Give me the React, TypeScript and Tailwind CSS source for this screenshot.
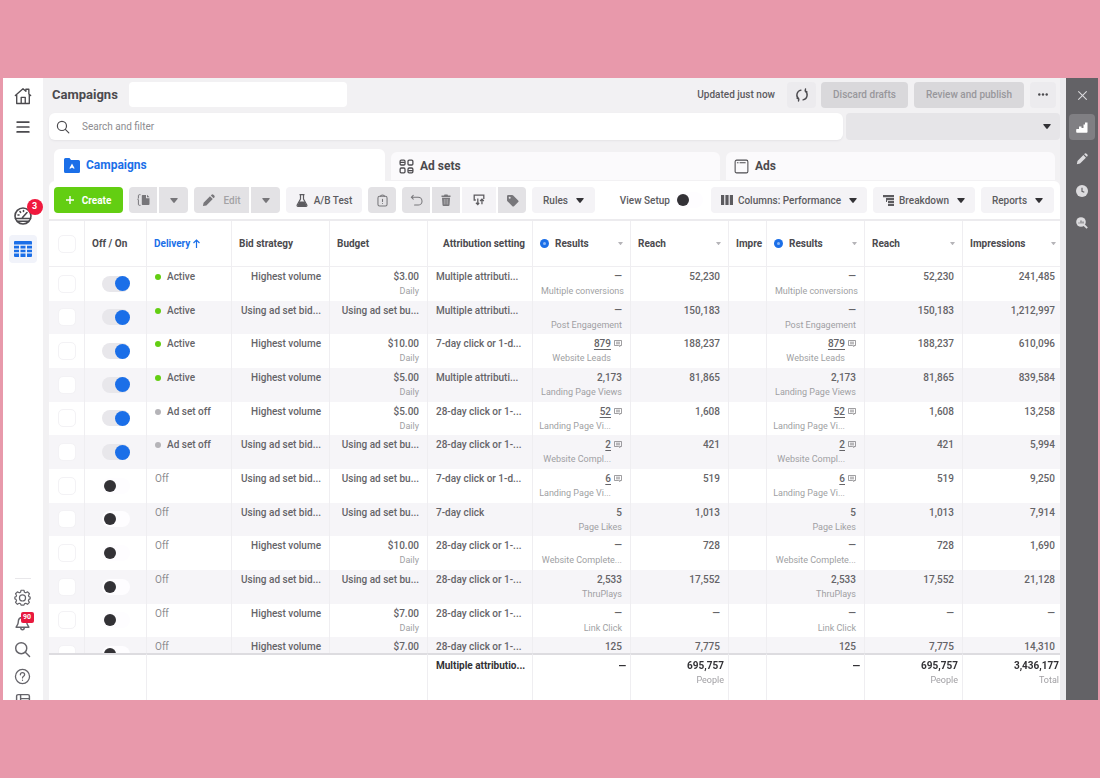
import type { ReactNode } from "react";
import clsx from "clsx";

type Campaign = {
  on: boolean;
  status: "Active" | "Ad set off" | "Off";
  bid: string;
  budget: string;
  attribution: string;
  result: string;
  resultType?: string;
  linked?: boolean;
  reach: string;
  impressions: string;
};

const SET_BID = "Using ad set bid...";
const SET_BUDGET = "Using ad set bu...";
const HIGHEST = "Highest volume";

const campaigns: Campaign[] = [
  { on: true, status: "Active", bid: HIGHEST, budget: "$3.00", attribution: "Multiple attributi...", result: "—", resultType: "Multiple conversions", reach: "52,230", impressions: "241,485" },
  { on: true, status: "Active", bid: SET_BID, budget: SET_BUDGET, attribution: "Multiple attributi...", result: "—", resultType: "Post Engagement", reach: "150,183", impressions: "1,212,997" },
  { on: true, status: "Active", bid: HIGHEST, budget: "$10.00", attribution: "7-day click or 1-d...", result: "879", resultType: "Website Leads", linked: true, reach: "188,237", impressions: "610,096" },
  { on: true, status: "Active", bid: HIGHEST, budget: "$5.00", attribution: "Multiple attributi...", result: "2,173", resultType: "Landing Page Views", reach: "81,865", impressions: "839,584" },
  { on: true, status: "Ad set off", bid: HIGHEST, budget: "$5.00", attribution: "28-day click or 1-...", result: "52", resultType: "Landing Page Vi...", linked: true, reach: "1,608", impressions: "13,258" },
  { on: true, status: "Ad set off", bid: SET_BID, budget: SET_BUDGET, attribution: "28-day click or 1-...", result: "2", resultType: "Website Compl...", linked: true, reach: "421", impressions: "5,994" },
  { on: false, status: "Off", bid: SET_BID, budget: SET_BUDGET, attribution: "7-day click or 1-d...", result: "6", resultType: "Landing Page Vi...", linked: true, reach: "519", impressions: "9,250" },
  { on: false, status: "Off", bid: SET_BID, budget: SET_BUDGET, attribution: "7-day click", result: "5", resultType: "Page Likes", reach: "1,013", impressions: "7,914" },
  { on: false, status: "Off", bid: HIGHEST, budget: "$10.00", attribution: "28-day click or 1-...", result: "—", resultType: "Website Complete...", reach: "728", impressions: "1,690" },
  { on: false, status: "Off", bid: SET_BID, budget: SET_BUDGET, attribution: "28-day click or 1-...", result: "2,533", resultType: "ThruPlays", reach: "17,552", impressions: "21,128" },
  { on: false, status: "Off", bid: HIGHEST, budget: "$7.00", attribution: "28-day click or 1-...", result: "—", resultType: "Link Click", reach: "—", impressions: "—" },
  { on: false, status: "Off", bid: HIGHEST, budget: "$7.00", attribution: "28-day click or 1-...", result: "125", reach: "7,775", impressions: "14,310" },
];

/* ---------- Icons ---------- */

function Stroke({ size = 18, width = 1.5, className, children }: { size?: number; width?: number; className?: string; children: ReactNode }) {
  return (
    <svg width={size} height={size} viewBox="0 0 20 20" fill="none" stroke="currentColor" strokeWidth={width} strokeLinecap="round" strokeLinejoin="round" className={className} aria-hidden="true">
      {children}
    </svg>
  );
}

function Caret({ className }: { className?: string }) {
  return (
    <svg width="8" height="5" viewBox="0 0 8 5" fill="currentColor" className={className} aria-hidden="true">
      <path d="M.8 0h6.4q.9.2.3 1L4.7 4.5q-.7.8-1.4 0L.5 1Q-.1.2.8 0z" />
    </svg>
  );
}

const HomeIcon = () => (
  <Stroke>
    <path d="M1.500 9.500 10 2l3.200 2.800V2.500h3.300v5.200l2 1.800" />
    <path d="M3 9v9.300h14V9" />
    <path d="M8 18v-6.500h4.500V18" />
  </Stroke>
);

const MenuIcon = () => (
  <Stroke width={1.9}>
    <path d="M3.500 4.500h13M3.500 10h13M3.500 15.500h13" />
  </Stroke>
);

const GaugeIcon = () => (
  <Stroke size={20} width={1.6}>
    <circle cx="10" cy="10" r="8" />
    <path d="M2.500 12.500h15M4.500 15.300h11M9.500 11.500L14 6.500M5 9h1M7 5.500l.6.900M10.500 4.600v.9" />
  </Stroke>
);

const TableIcon = () => (
  <svg width="18" height="16" viewBox="0 0 18 16" fill="currentColor" aria-hidden="true">
    <path d="M1 0h16q1 0 1 1v2.500H0V1q0-1 1-1z" />
    <path d="M0 4.800h5v2.600H0zM6.500 4.800h5v2.600h-5zM13 4.800h5v2.600h-5zM0 8.700h5v2.600H0zM6.500 8.700h5v2.600h-5zM13 8.700h5v2.600h-5zM0 12.600h5V16H1q-1 0-1-1zM6.500 12.600h5V16h-5zM13 12.600h5V15q0 1-1 1h-4z" />
  </svg>
);

const GearIcon = () => (
  <Stroke size={17} width={1.4}>
    <path d="M8.300 1.500h3.400l.6 2.300 1.600.7 2.100-1.200 2.200 2.300-1.200 2.100.5 1.300 1.500.4v2.200l-1.500.6-.6 1.500 1.200 2-2.200 2.300-2.100-1.200-1.500.7-.6 1.500H8.300l-.6-1.600-1.600-.6L4 18l-2.200-2.300 1.200-2-.6-1.500-1.400-.6V9.400L2.500 9 3 7.700 1.800 5.600 4 3.300l2.100 1.200 1.600-.7z" />
    <circle cx="10" cy="10.500" r="3.600" />
  </Stroke>
);

const BellIcon = () => (
  <Stroke size={17} width={1.7}>
    <path d="M10 3C6.500 3 5 5.500 5 8.500c0 3.500-2.500 4.500-2.500 6h15c0-1.500-2.500-2.500-2.500-6C15 5.500 13.500 3 10 3z" />
    <path d="M8 15c0 3 4 3 4 0" />
  </Stroke>
);

const SearchIcon = ({ size = 18 }: { size?: number }) => (
  <Stroke size={size} width={1.7}>
    <circle cx="8.500" cy="8.500" r="6.500" />
    <path d="M13.300 13.300l5 5" />
  </Stroke>
);

const HelpIcon = () => (
  <Stroke size={17} width={1.5}>
    <circle cx="10" cy="10" r="8.300" />
    <path d="M7.500 8c0-3.300 5-3.300 5 0 0 1.800-2.500 1.800-2.500 3.700M10 14.200v.2" />
  </Stroke>
);

const PanelIcon = () => (
  <Stroke size={16} width={1.8}>
    <rect x="2" y="2" width="16" height="16" rx="2" />
    <path d="M7 2v16M7 7h11" />
  </Stroke>
);

const FolderIcon = () => (
  <svg width="16" height="15" viewBox="0 0 16 15" aria-hidden="true">
    <path d="M1.500 0h4l1.500 2h7.500Q16 2 16 3.500v10q0 1.500-1.500 1.500h-13Q0 15 0 13.500v-12Q0 0 1.500 0z" fill="currentColor" />
    <path d="M8 5.500l2.700 5H9.300L8 9.500l-1.300 1H5.300z" fill="#fff" />
  </svg>
);

const AdSetsIcon = () => (
  <Stroke size={15} width={1.7}>
    <rect x="1.500" y="1.500" width="6.500" height="6.500" rx="1.500" />
    <rect x="12" y="1.500" width="6.500" height="6.500" rx="1.500" />
    <rect x="1.500" y="12" width="6.500" height="6.500" rx="1.500" />
    <rect x="12" y="12" width="6.500" height="6.500" rx="1.500" />
    <path d="M2 4.500h5M13 15.500h5" />
  </Stroke>
);

const AdsIcon = () => (
  <Stroke size={15} width={1.4}>
    <rect x="1.500" y="1.500" width="17" height="17" rx="2" />
    <path d="M4.500 5h1M8 5h7" />
  </Stroke>
);

const PencilIcon = ({ size = 13 }: { size?: number }) => (
  <svg width={size} height={size} viewBox="0 0 14 14" fill="currentColor" aria-hidden="true">
    <path d="M1 13l.7-3.700L8.600 2.400l3 3L4.700 12.300zM9.500 1.500l.8-.8q1-.8 2 .1l.9.900q.9 1 .1 2l-.8.800z" />
  </svg>
);

const CopyIcon = () => (
  <svg width="13" height="12" viewBox="0 0 13 12" aria-hidden="true">
    <path d="M3.500.7H2.400q-1 0-1 1v2.600L.6 5l.8.800v4.500q0 1 1 1h1.100" fill="none" stroke="currentColor" />
    <path d="M5.500 1H9v3.200h3.500V10q0 1-1 1h-6q-.7 0-.7-1V1.800q0-.8.700-.8z" fill="currentColor" />
    <path d="M10 .8l2.500 2.500H10z" fill="currentColor" />
  </svg>
);

const FlaskIcon = () => (
  <svg width="12" height="13" viewBox="0 0 12 13" aria-hidden="true">
    <path d="M3.500.7h5M4.500 1v4L1.200 11q-.5 1.300.8 1.300h8q1.300 0 .8-1.300L7.500 5V1" fill="none" stroke="currentColor" strokeWidth="1.200" />
    <path d="M3.500 7.500h5l2 3.700q0 .8-.8.800H2.300q-.8 0-.8-.8z" fill="currentColor" />
  </svg>
);

const ClipboardIcon = () => (
  <Stroke size={13} width={1.6}>
    <rect x="3" y="3.500" width="14" height="15" rx="2.500" />
    <path d="M7 3.500C7 1 13 1 13 3.500M10 8v3.500M10 14.500v.2" />
  </Stroke>
);

const UndoIcon = () => (
  <Stroke size={13} width={1.6}>
    <path d="M5 2L2 5l3 3M2 5h10.500a5.500 5.500 0 010 12H7" />
  </Stroke>
);

const TrashIcon = () => (
  <svg width="10" height="12" viewBox="0 0 10 12" aria-hidden="true">
    <path d="M3.500.5h3l.5 1h2.500v1.500H.500V1.500H3zM1 3.700h8l-.5 7.300q-.1 1-1.100 1H2.600q-1 0-1.100-1z" fill="currentColor" />
    <path d="M3.300 5v5.500M5 5v5.500M6.700 5v5.500" stroke="#d9d8db" strokeWidth=".5" />
  </svg>
);

const SwapIcon = () => (
  <svg width="12" height="12" viewBox="0 0 13 13" fill="none" stroke="currentColor" strokeWidth="1.400" aria-hidden="true">
    <path d="M3 6.500H1.300V1.300h10.400v4.200" />
    <path d="M5.200 5v6.500M3.200 9.500l2 2 1.500-1.800M9.700 11V5.500M7.700 7.500l2-2 2 2" />
  </svg>
);

const TagIcon = () => (
  <svg width="13" height="13" viewBox="0 0 13 13" aria-hidden="true">
    <path d="M1 2.200Q1 1 2.200 1h4q.6 0 1 .4l5 5q.8.8 0 1.600l-4.200 4.200q-.8.800-1.600 0l-5-5Q1 6.800 1 6.200z" fill="currentColor" />
    <circle cx="3.700" cy="3.700" r="1" fill="#e3e2e5" />
  </svg>
);

const ColumnsIcon = () => (
  <svg width="12" height="10" viewBox="0 0 12 10" fill="currentColor" aria-hidden="true">
    <path d="M0 0h3.200v10H0zM4.400 0h3.200v10H4.400zM8.800 0H12v10H8.800z" />
  </svg>
);

const BreakdownIcon = () => (
  <svg width="11" height="11" viewBox="0 0 11 11" fill="currentColor" aria-hidden="true">
    <path d="M0 0h11v2.200H0zM3 3h8v2.200H3zM5 6h6v2H5zM5 8.800h6V11H5zM3 3h1v4H3z" />
  </svg>
);

const RefreshIcon = () => (
  <Stroke size={14} width={2}>
    <path d="M5.500 15.800A7.200 7.200 0 018.500 3M14.500 4.200A7.200 7.200 0 0111.500 17M3 14.500l2.500 1.500L5 18.500M17 5.500L14.500 4 15 1.500" />
  </Stroke>
);

const ChartIcon = () => (
  <svg width="12" height="11" viewBox="0 0 12 11" fill="currentColor" aria-hidden="true">
    <path d="M.8 7H3V4.500h2.500V6h2V2.500H9V.5h2.500V10q0 .8-.8.800H1q-.8 0-.8-.8V7.700Q.200 7 .8 7z" />
  </svg>
);

const ClockIcon = () => (
  <svg width="12" height="12" viewBox="0 0 12 12" aria-hidden="true">
    <circle cx="6" cy="6" r="6" fill="currentColor" />
    <path d="M6 2.700v3.600l2.300 1" fill="none" stroke="#636266" strokeWidth="1.200" />
  </svg>
);

const InspectIcon = () => (
  <svg width="12" height="12" viewBox="0 0 12 12" aria-hidden="true">
    <circle cx="5" cy="5" r="4.800" fill="currentColor" />
    <path d="M8 8l3.200 3.200" stroke="currentColor" strokeWidth="1.800" />
    <path d="M3 6.500v-1M5 6.500V3.500M7 6.500v-2" stroke="#636266" />
  </svg>
);

const NoteIcon = () => (
  <svg width="8" height="7" viewBox="0 0 8 7" fill="none" stroke="currentColor" strokeWidth=".7" aria-hidden="true">
    <path d="M.5.5h7v5H5.800L6 6.500 4.500 5.500h-4zM2 2.200h4M2 3.800h4" />
  </svg>
);

/* ---------- Small controls ---------- */

const tones = {
  light: "bg-[#f4f3f6] text-[#5c5b5f]",
  gray: "bg-[#e3e2e5] text-[#77767a]",
  muted: "bg-[#ecebee] text-[#4b4a4e]",
  disabled: "bg-[#d9d8db] text-[#98979b]",
  create: "bg-[#63ce12] text-white",
};

type ButtonProps = { label?: string; tone?: keyof typeof tones; className?: string; children?: ReactNode };

function ToolButton({ label, tone = "light", className, children }: ButtonProps) {
  return (
    <button
      type="button"
      aria-label={label}
      className={clsx("flex h-[26px] shrink-0 items-center justify-center gap-2 font-medium whitespace-nowrap", tones[tone], className)}
    >
      {children}
    </button>
  );
}

function Checkbox({ label }: { label: string }) {
  return (
    <input
      type="checkbox"
      aria-label={label}
      className="mx-auto block size-[18px] appearance-none rounded-[5px] border border-[#f3f2f5] bg-white checked:bg-[#1b6fe8]"
    />
  );
}

function Toggle({ label, on }: { label: string; on?: boolean }) {
  return (
    <input
      type="checkbox"
      role="switch"
      aria-label={label}
      defaultChecked={on}
      className="mx-auto flex h-4 w-7 appearance-none items-center rounded-full bg-[#fefdff] px-[2px] before:size-3 before:rounded-full before:bg-[#333236] checked:justify-end checked:bg-[#e8e7eb] checked:px-0 checked:before:size-[15px] checked:before:bg-[#1b6fe8]"
    />
  );
}

/* ---------- Side rails ---------- */

function SideLink({ label, className, children }: { label: string; className?: string; children: ReactNode }) {
  return (
    <a href="#" aria-label={label} className={clsx("relative flex shrink-0 items-center justify-center", className)}>
      {children}
    </a>
  );
}

function Sidebar() {
  return (
    <nav className="flex w-10 shrink-0 flex-col items-center overflow-hidden bg-white pr-px text-[#4b4a4e]">
      <SideLink label="Home" className="mt-2 size-5"><HomeIcon /></SideLink>
      <SideLink label="Menu" className="mt-[11px] size-5"><MenuIcon /></SideLink>
      <SideLink label="Account overview" className="mt-[69px] size-5">
        <GaugeIcon />
        <span className="absolute -top-[7px] left-[14px] flex size-4 items-center justify-center rounded-full bg-[#f0193e] text-[9px] font-bold text-white">3</span>
      </SideLink>
      <SideLink label="Campaigns table" className="mt-[9px] size-7 rounded bg-[#f1f3fa] text-[#1b6fe8]"><TableIcon /></SideLink>
      <div className="mt-auto flex flex-col items-center text-[#65646a]">
        <div className="w-4 border-t border-[#e8e7ea]" />
        <SideLink label="Settings" className="mt-[5px] h-[26px] w-5"><GearIcon /></SideLink>
        <SideLink label="Notifications" className="h-[26px] w-5">
          <BellIcon />
          <span className="absolute top-[2px] left-2 flex h-[11px] w-[13px] items-center justify-center rounded-[2px] bg-[#e8193e] text-[7px] font-bold text-white">90</span>
        </SideLink>
        <SideLink label="Search" className="h-[27px] w-5"><SearchIcon size={17} /></SideLink>
        <SideLink label="Help" className="h-[26px] w-5"><HelpIcon /></SideLink>
        <div className="mt-1 h-[7px] overflow-hidden">
          <SideLink label="Collapse" className="w-5"><PanelIcon /></SideLink>
        </div>
      </div>
    </nav>
  );
}

function RightRail() {
  const item = "flex size-[26px] items-center justify-center rounded";
  return (
    <aside className="flex w-8 shrink-0 flex-col items-center gap-[6px] bg-[#636266] pt-1 text-[#dcdbde]">
      <button type="button" aria-label="Close" className={item}>
        <Stroke size={13} width={1.6}><path d="M4 4l12 12M16 4L4 16" /></Stroke>
      </button>
      <button type="button" aria-label="Charts" className={clsx(item, "bg-[#807f83] text-white")}><ChartIcon /></button>
      <button type="button" aria-label="Edit" className={item}><PencilIcon size={12} /></button>
      <button type="button" aria-label="History" className={item}><ClockIcon /></button>
      <button type="button" aria-label="Inspect" className={item}><InspectIcon /></button>
    </aside>
  );
}

/* ---------- Header, tabs, toolbar ---------- */

function TopBar() {
  return (
    <header className="flex h-[35px] shrink-0 items-center pr-1 pb-[2px] pl-[3px]">
      <h1 className="text-[13px] font-bold text-[#4b4a4e]">Campaigns</h1>
      <input type="text" aria-label="Account" className="mr-auto ml-[11px] h-[25px] w-[218px] rounded bg-white px-2 outline-none" />
      <span className="font-medium text-[#5c5b5f]">Updated just now</span>
      <ToolButton label="Refresh" tone="muted" className="ml-3 w-[29px] rounded"><RefreshIcon /></ToolButton>
      <ToolButton tone="disabled" className="ml-[5px] w-[87px] rounded">Discard drafts</ToolButton>
      <ToolButton tone="disabled" className="ml-[6px] w-[110px] rounded">Review and publish</ToolButton>
      <ToolButton label="More" tone="muted" className="ml-[6px] w-[26px] rounded">
        <svg width="10" height="3" viewBox="0 0 10 3" fill="currentColor" aria-hidden="true">
          <circle cx="1.300" cy="1.500" r="1.200" />
          <circle cx="5" cy="1.500" r="1.200" />
          <circle cx="8.700" cy="1.500" r="1.200" />
        </svg>
      </ToolButton>
    </header>
  );
}

function SearchBar() {
  return (
    <div className="flex h-[27px] shrink-0 gap-[3px]">
      <label className="flex flex-1 items-center gap-3 rounded-md bg-white pl-[7px] text-[#4b4a4e] shadow-[0_1px_2px_#e4e3e6]">
        <SearchIcon size={14} />
        <input type="text" placeholder="Search and filter" aria-label="Search and filter" className="h-full flex-1 bg-transparent outline-none placeholder:text-[#8d8c90]" />
      </label>
      <div className="relative w-[214px]">
        <select aria-label="Date range" className="h-full w-full appearance-none rounded bg-[#e6e5e8] px-3" />
        <Caret className="pointer-events-none absolute top-[11px] right-[9px] text-[#333236]" />
      </div>
    </div>
  );
}

function Tabs() {
  const tab = "flex flex-1 items-center gap-[6px] rounded-t-md text-[12px] font-bold";
  return (
    <div role="tablist" className="mt-[9px] flex h-8 shrink-0 items-end gap-[6px] px-[5px]">
      <button type="button" role="tab" aria-selected="true" className={clsx(tab, "h-8 bg-white pl-[10px] text-[#1b6fe8]")}>
        <FolderIcon />
        Campaigns
      </button>
      <button type="button" role="tab" aria-selected="false" className={clsx(tab, "mb-px h-7 bg-[#fbfafc] pl-2 text-[#4b4a4e]")}>
        <AdSetsIcon />
        Ad sets
      </button>
      <button type="button" role="tab" aria-selected="false" className={clsx(tab, "mb-px h-7 bg-[#fbfafc] pl-2 text-[#4b4a4e]")}>
        <AdsIcon />
        Ads
      </button>
    </div>
  );
}

function Toolbar() {
  return (
    <div className="flex h-[38px] shrink-0 items-center gap-[6px] rounded-t-md bg-white pr-[6px] pl-[5px]">
      <ToolButton tone="create" className="w-[69px] rounded">
        <svg width="8" height="8" viewBox="0 0 8 8" stroke="currentColor" strokeWidth="1.400" aria-hidden="true">
          <path d="M4 0v8M0 4h8" />
        </svg>
        <span className="font-bold">Create</span>
      </ToolButton>
      <div className="flex gap-[2px]">
        <ToolButton label="Duplicate" tone="gray" className="w-7 rounded-l"><CopyIcon /></ToolButton>
        <ToolButton label="Duplicate options" tone="gray" className="w-[29px] rounded-r"><Caret /></ToolButton>
      </div>
      <div className="flex gap-[2px]">
        <ToolButton tone="gray" className="w-[55px] rounded-l">
          <PencilIcon />
          <span className="text-[#a3a2a6]">Edit</span>
        </ToolButton>
        <ToolButton label="Edit options" tone="gray" className="w-[29px] rounded-r"><Caret /></ToolButton>
      </div>
      <ToolButton className="w-[76px] rounded">
        <span className="flex items-center gap-[6px]">
          <FlaskIcon />
          A/B Test
        </span>
      </ToolButton>
      <ToolButton label="Clipboard" tone="gray" className="w-7 rounded"><ClipboardIcon /></ToolButton>
      <div className="flex gap-[2px]">
        <ToolButton label="Undo" tone="gray" className="w-7 rounded-l"><UndoIcon /></ToolButton>
        <ToolButton label="Delete" tone="gray" className="w-7"><TrashIcon /></ToolButton>
        <ToolButton label="Export and import" className="w-[34px]"><SwapIcon /></ToolButton>
        <ToolButton label="Tags" tone="gray" className="w-7 rounded-r"><TagIcon /></ToolButton>
      </div>
      <ToolButton className="w-[63px] rounded">Rules<Caret className="text-[#333236]" /></ToolButton>
      <label className="mr-[2px] ml-auto flex items-center gap-[5px] font-medium whitespace-nowrap text-[#5c5b5f]">
        View Setup
        <Toggle label="View Setup" />
      </label>
      <ToolButton className="w-[156px] rounded">
        <span className="flex items-center gap-[5px]">
          <ColumnsIcon />
          Columns: Performance
        </span>
        <Caret className="text-[#333236]" />
      </ToolButton>
      <ToolButton className="w-[102px] rounded">
        <span className="flex items-center gap-[5px]">
          <BreakdownIcon />
          Breakdown
        </span>
        <Caret className="text-[#333236]" />
      </ToolButton>
      <ToolButton className="w-[73px] rounded">Reports<Caret className="text-[#333236]" /></ToolButton>
    </div>
  );
}

/* ---------- Table ---------- */

function HeadCell({ info, sort, className, children }: { info?: boolean; sort?: boolean; className?: string; children?: ReactNode }) {
  return (
    <th scope="col" className={clsx("h-[46px] overflow-hidden border-r border-b border-[#efeef1] px-[7px] text-left font-bold whitespace-nowrap", className)}>
      <span className="flex items-center">
        {info && (
          <svg width="9" height="9" viewBox="0 0 9 9" className="mr-[6px] text-[#1b6fe8]" aria-hidden="true">
            <circle cx="4.500" cy="4.500" r="4.500" fill="currentColor" />
            <circle cx="4.500" cy="4.500" r="1.500" fill="#8db8f5" />
          </svg>
        )}
        {children}
        {sort && <Caret className="ml-auto w-[5px] text-[#b5b4b8]" />}
      </span>
    </th>
  );
}

type CellProps = { sub?: string; left?: boolean; span?: number; className?: string; children?: ReactNode };

function Cell({ sub, left, span, className, children }: CellProps) {
  return (
    <td colSpan={span} className={clsx("border-r border-[#efeef1] px-2 pt-[3px] align-top leading-[14px] whitespace-nowrap", left ? "text-left" : "text-right", className)}>
      {children}
      {sub && <div className="text-[9px] font-normal text-[#a09fa3]">{sub}</div>}
    </td>
  );
}

function ResultCell({ row }: { row: Campaign }) {
  if (!row.linked) return <Cell sub={row.resultType}>{row.result}</Cell>;
  return (
    <Cell>
      <div className="flex justify-end gap-[3px]">
        <div>
          <a href="#" className="underline underline-offset-2">{row.result}</a>
          <div className="text-[9px] font-normal text-[#a09fa3]">{row.resultType}</div>
        </div>
        <span className="pt-[3px] text-[#77767a]"><NoteIcon /></span>
      </div>
    </Cell>
  );
}

function StatusCell({ status }: { status: Campaign["status"] }) {
  return (
    <Cell left>
      {status === "Off" ? (
        <span className="font-normal text-[#8d8c90]">Off</span>
      ) : (
        <span className="flex items-center gap-[6px]">
          <span className={clsx("size-[6px] rounded-full", status === "Active" ? "bg-[#63ce12]" : "bg-[#b5b4b8]")} />
          {status}
        </span>
      )}
    </Cell>
  );
}

function CampaignTable() {
  return (
    <div className="min-h-0 flex-1 overflow-hidden border-t-2 border-[#ecebee] bg-white">
      {/* The last column runs a little past the visible edge */}
      <table className="h-[497px] w-[calc(100%+4px)] table-fixed border-separate border-spacing-0">
        <colgroup>
          <col className="w-9" />
          <col className="w-[62px]" />
          <col className="w-[85px]" />
          <col className="w-[98px]" />
          <col className="w-[98px]" />
          <col className="w-[105px]" />
          <col className="w-[98px]" />
          <col className="w-[98px]" />
          <col className="w-[38px]" />
          <col className="w-[98px]" />
          <col className="w-[98px]" />
          <col />
        </colgroup>
        <thead className="text-[#4b4a4e]">
          <tr className="h-[46px]">
            <HeadCell><Checkbox label="Select all" /></HeadCell>
            <HeadCell>Off / On</HeadCell>
            <HeadCell className="text-[#1b6fe8]">
              Delivery
              <svg width="7" height="9" viewBox="0 0 7 9" fill="none" stroke="currentColor" strokeWidth="1.200" className="ml-[3px]" aria-hidden="true">
                <path d="M3.500 9V1M.5 4l3-3 3 3" />
              </svg>
            </HeadCell>
            <HeadCell>Bid strategy</HeadCell>
            <HeadCell>Budget</HeadCell>
            <HeadCell><span className="ml-auto">Attribution setting</span></HeadCell>
            <HeadCell info sort>Results</HeadCell>
            <HeadCell sort>Reach</HeadCell>
            <HeadCell>Impre</HeadCell>
            <HeadCell info sort>Results</HeadCell>
            <HeadCell sort>Reach</HeadCell>
            <HeadCell sort>Impressions</HeadCell>
          </tr>
        </thead>
        <tbody className="font-medium text-[#656468]">
          {campaigns.map((row, i) => (
            <tr key={i} className="even:bg-[#f6f5f8]">
              <td className="border-r border-[#efeef1]"><Checkbox label={`Select campaign ${i + 1}`} /></td>
              <td className="border-r border-[#efeef1]"><Toggle label={`Campaign ${i + 1}`} on={row.on} /></td>
              <StatusCell status={row.status} />
              <Cell>{row.bid}</Cell>
              <Cell sub={row.budget.startsWith("$") ? "Daily" : undefined}>{row.budget}</Cell>
              <Cell left>{row.attribution}</Cell>
              <ResultCell row={row} />
              <Cell>{row.reach}</Cell>
              <Cell />
              <ResultCell row={row} />
              <Cell>{row.reach}</Cell>
              <Cell>{row.impressions}</Cell>
            </tr>
          ))}
        </tbody>
        <tfoot className="sticky bottom-0 bg-white font-bold text-[#333236]">
          <tr className="h-[47px] [&>td]:border-t-2 [&>td]:border-t-[#dddce0] [&>td]:pt-1 [&>td]:pr-1">
            <Cell span={2} />
            <Cell span={3} />
            <Cell left className="overflow-hidden">Multiple attributio...</Cell>
            <Cell>—</Cell>
            <Cell sub="People">695,757</Cell>
            <Cell />
            <Cell>—</Cell>
            <Cell sub="People">695,757</Cell>
            <Cell sub="Total">3,436,177</Cell>
          </tr>
        </tfoot>
      </table>
    </div>
  );
}

export default function App() {
  return (
    <div className="h-screen bg-[#e899ab] py-[78px] pr-[2px] pl-[3px] font-[Roboto,'Liberation_Sans',sans-serif] text-[10px]">
      <div className="flex h-full overflow-hidden bg-[#f2f1f3]">
        <Sidebar />
        <main className="ml-[6px] flex min-w-0 flex-1 flex-col">
          <TopBar />
          <SearchBar />
          <Tabs />
          <Toolbar />
          <CampaignTable />
        </main>
        <div className="w-[6px] shrink-0 bg-[#ecebee]" />
        <RightRail />
      </div>
    </div>
  );
}
